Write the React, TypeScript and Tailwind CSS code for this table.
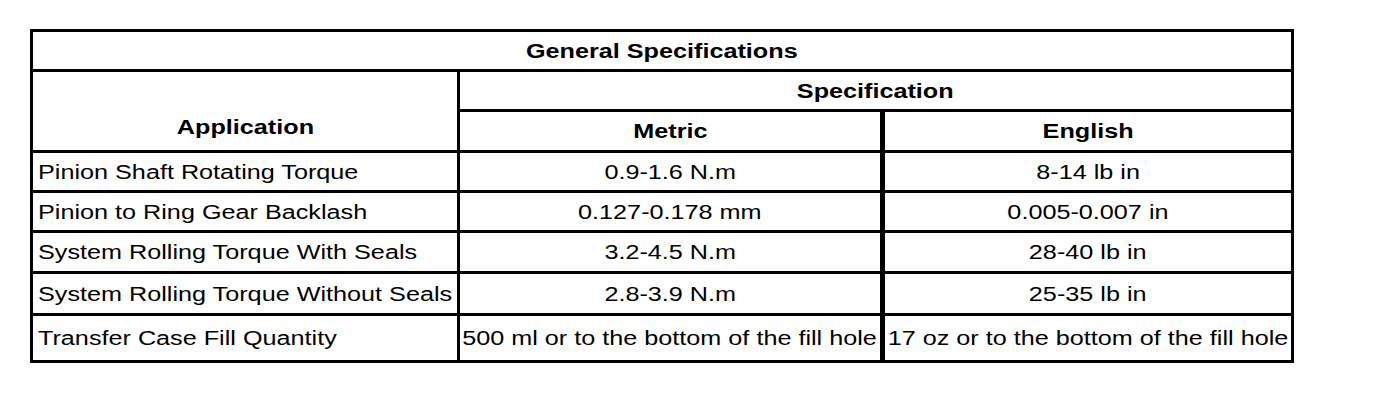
const rows = [
  ["Pinion Shaft Rotating Torque", "0.9-1.6 N.m", "8-14 lb in"],
  ["Pinion to Ring Gear Backlash", "0.127-0.178 mm", "0.005-0.007 in"],
  ["System Rolling Torque With Seals", "3.2-4.5 N.m", "28-40 lb in"],
  ["System Rolling Torque Without Seals", "2.8-3.9 N.m", "25-35 lb in"],
  [
    "Transfer Case Fill Quantity",
    "500 ml or to the bottom of the fill hole",
    "17 oz or to the bottom of the fill hole",
  ],
];

const heights = ["h-[40px]", "h-[40px]", "h-[41px]", "h-[42px]", "h-[47px]"];

function Txt({ children, left }: { children: React.ReactNode; left?: boolean }) {
  return (
    <span
      className={`inline-block whitespace-nowrap scale-x-[1.26] ${left ? "origin-left" : "origin-center"}`}
    >
      {children}
    </span>
  );
}

export default function App() {
  return (
    <div className="w-[1376px] h-[410px] bg-white pt-[29px] pl-[30px] text-black font-['Liberation_Sans',Arial,sans-serif] text-[20px] leading-[24px]">
      <table className="table-fixed border-collapse w-[1261px]">
        <colgroup>
          <col className="w-[427px]" />
          <col className="w-[424px]" />
          <col className="w-[410px]" />
        </colgroup>
        <thead>
          <tr className="h-[40px]">
            <th colSpan={3} className="border-[3px] border-black text-center font-bold p-0">
              <Txt>General Specifications</Txt>
            </th>
          </tr>
          <tr className="h-[40px]">
            <th rowSpan={2} className="border-[3px] border-black text-center font-bold align-bottom p-0 pb-[11px]">
              <Txt>Application</Txt>
            </th>
            <th colSpan={2} className="border-[3px] border-black text-center font-bold p-0">
              <Txt>Specification</Txt>
            </th>
          </tr>
          <tr className="h-[41px]">
            <th className="border-[3px] border-r-[5px] border-r-double border-black text-center font-bold p-0">
              <Txt>Metric</Txt>
            </th>
            <th className="border-[3px] border-black text-center font-bold p-0">
              <Txt>English</Txt>
            </th>
          </tr>
        </thead>
        <tbody>
          {rows.map((r, i) => (
            <tr key={r[0]} className={heights[i]}>
              <td className="border-[3px] border-black text-left pl-[5px] pr-0 py-0">
                <Txt left>{r[0]}</Txt>
              </td>
              <td className="border-[3px] border-r-[5px] border-r-double border-black text-center p-0">
                <Txt>{r[1]}</Txt>
              </td>
              <td className="border-[3px] border-black text-center p-0">
                <Txt>{r[2]}</Txt>
              </td>
            </tr>
          ))}
        </tbody>
      </table>
    </div>
  );
}
